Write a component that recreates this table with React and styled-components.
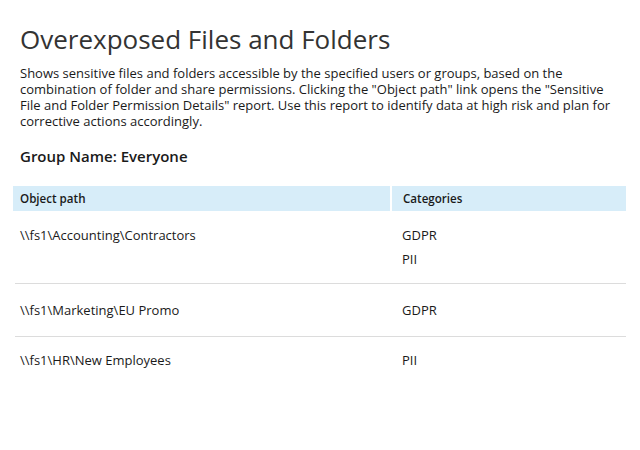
import React from 'react'
import styled, { createGlobalStyle } from 'styled-components'

const GlobalStyle = createGlobalStyle`
  body {
    margin: 0;
    background: #ffffff;
    font-family: "Open Sans", "Liberation Sans", sans-serif;
    color: #1a1a1a;
  }
`

const Page = styled.div`
  padding: 22px 14px 0 13px;
`

const Intro = styled.div`
  padding-left: 7px;
`

const Title = styled.h1`
  margin: 0;
  font-size: 26px;
  font-weight: 400;
  line-height: 34px;
  color: #333333;
`

const Description = styled.p`
  margin: 9px 0 0;
  font-size: 13px;
  line-height: 16px;
  width: 600px;
`

const GroupName = styled.h2`
  margin: 17px 0 0;
  font-size: 15px;
  font-weight: 600;
  line-height: 20px;
`

const Table = styled.div`
  margin-top: 20px;
  display: grid;
  grid-template-columns: 377px 1fr;
  column-gap: 2px;
`

const HeadCell = styled.div`
  background: #d7edf9;
  font-size: 11.6px;
  font-weight: 600;
  height: 25px;
  line-height: 25px;
  padding-left: ${(p) => p.$pad}px;
`

const Row = styled.div`
  grid-column: 1 / -1;
  display: grid;
  grid-template-columns: 379px 1fr;
  padding: ${(p) => p.$padTop}px 0 ${(p) => p.$padBottom}px;
  margin-left: 2px;
  border-bottom: ${(p) => (p.$last ? 'none' : '1px solid #dcdcdc')};
  font-size: 13px;
  line-height: 24px;
`

const PathCell = styled.div`
  padding-left: 5px;
`

const CategoryCell = styled.div`
  padding-left: 8px;
`

const rows = [
  { path: '\\\\fs1\\Accounting\\Contractors', cats: ['GDPR', 'PII'], top: 12, bottom: 12 },
  { path: '\\\\fs1\\Marketing\\EU Promo', cats: ['GDPR'], top: 14, bottom: 14 },
  { path: '\\\\fs1\\HR\\New Employees', cats: ['PII'], top: 11, bottom: 12 },
]

export default function App() {
  return (
    <>
      <GlobalStyle />
      <Page>
        <Intro>
          <Title>Overexposed Files and Folders</Title>
          <Description>
            Shows sensitive files and folders accessible by the specified users or groups, based on the
            combination of folder and share permissions. Clicking the "Object path" link opens the "Sensitive
            File and Folder Permission Details" report. Use this report to identify data at high risk and plan for
            corrective actions accordingly.
          </Description>
          <GroupName>Group Name: Everyone</GroupName>
        </Intro>
        <Table>
          <HeadCell $pad={7}>Object path</HeadCell>
          <HeadCell $pad={11}>Categories</HeadCell>
          {rows.map((r, i) => (
            <Row
              key={r.path}
              $last={i === rows.length - 1}
              $padTop={r.top}
              $padBottom={r.bottom}
            >
              <PathCell>{r.path}</PathCell>
              <CategoryCell>
                {r.cats.map((c) => (
                  <div key={c}>{c}</div>
                ))}
              </CategoryCell>
            </Row>
          ))}
        </Table>
      </Page>
    </>
  )
}
